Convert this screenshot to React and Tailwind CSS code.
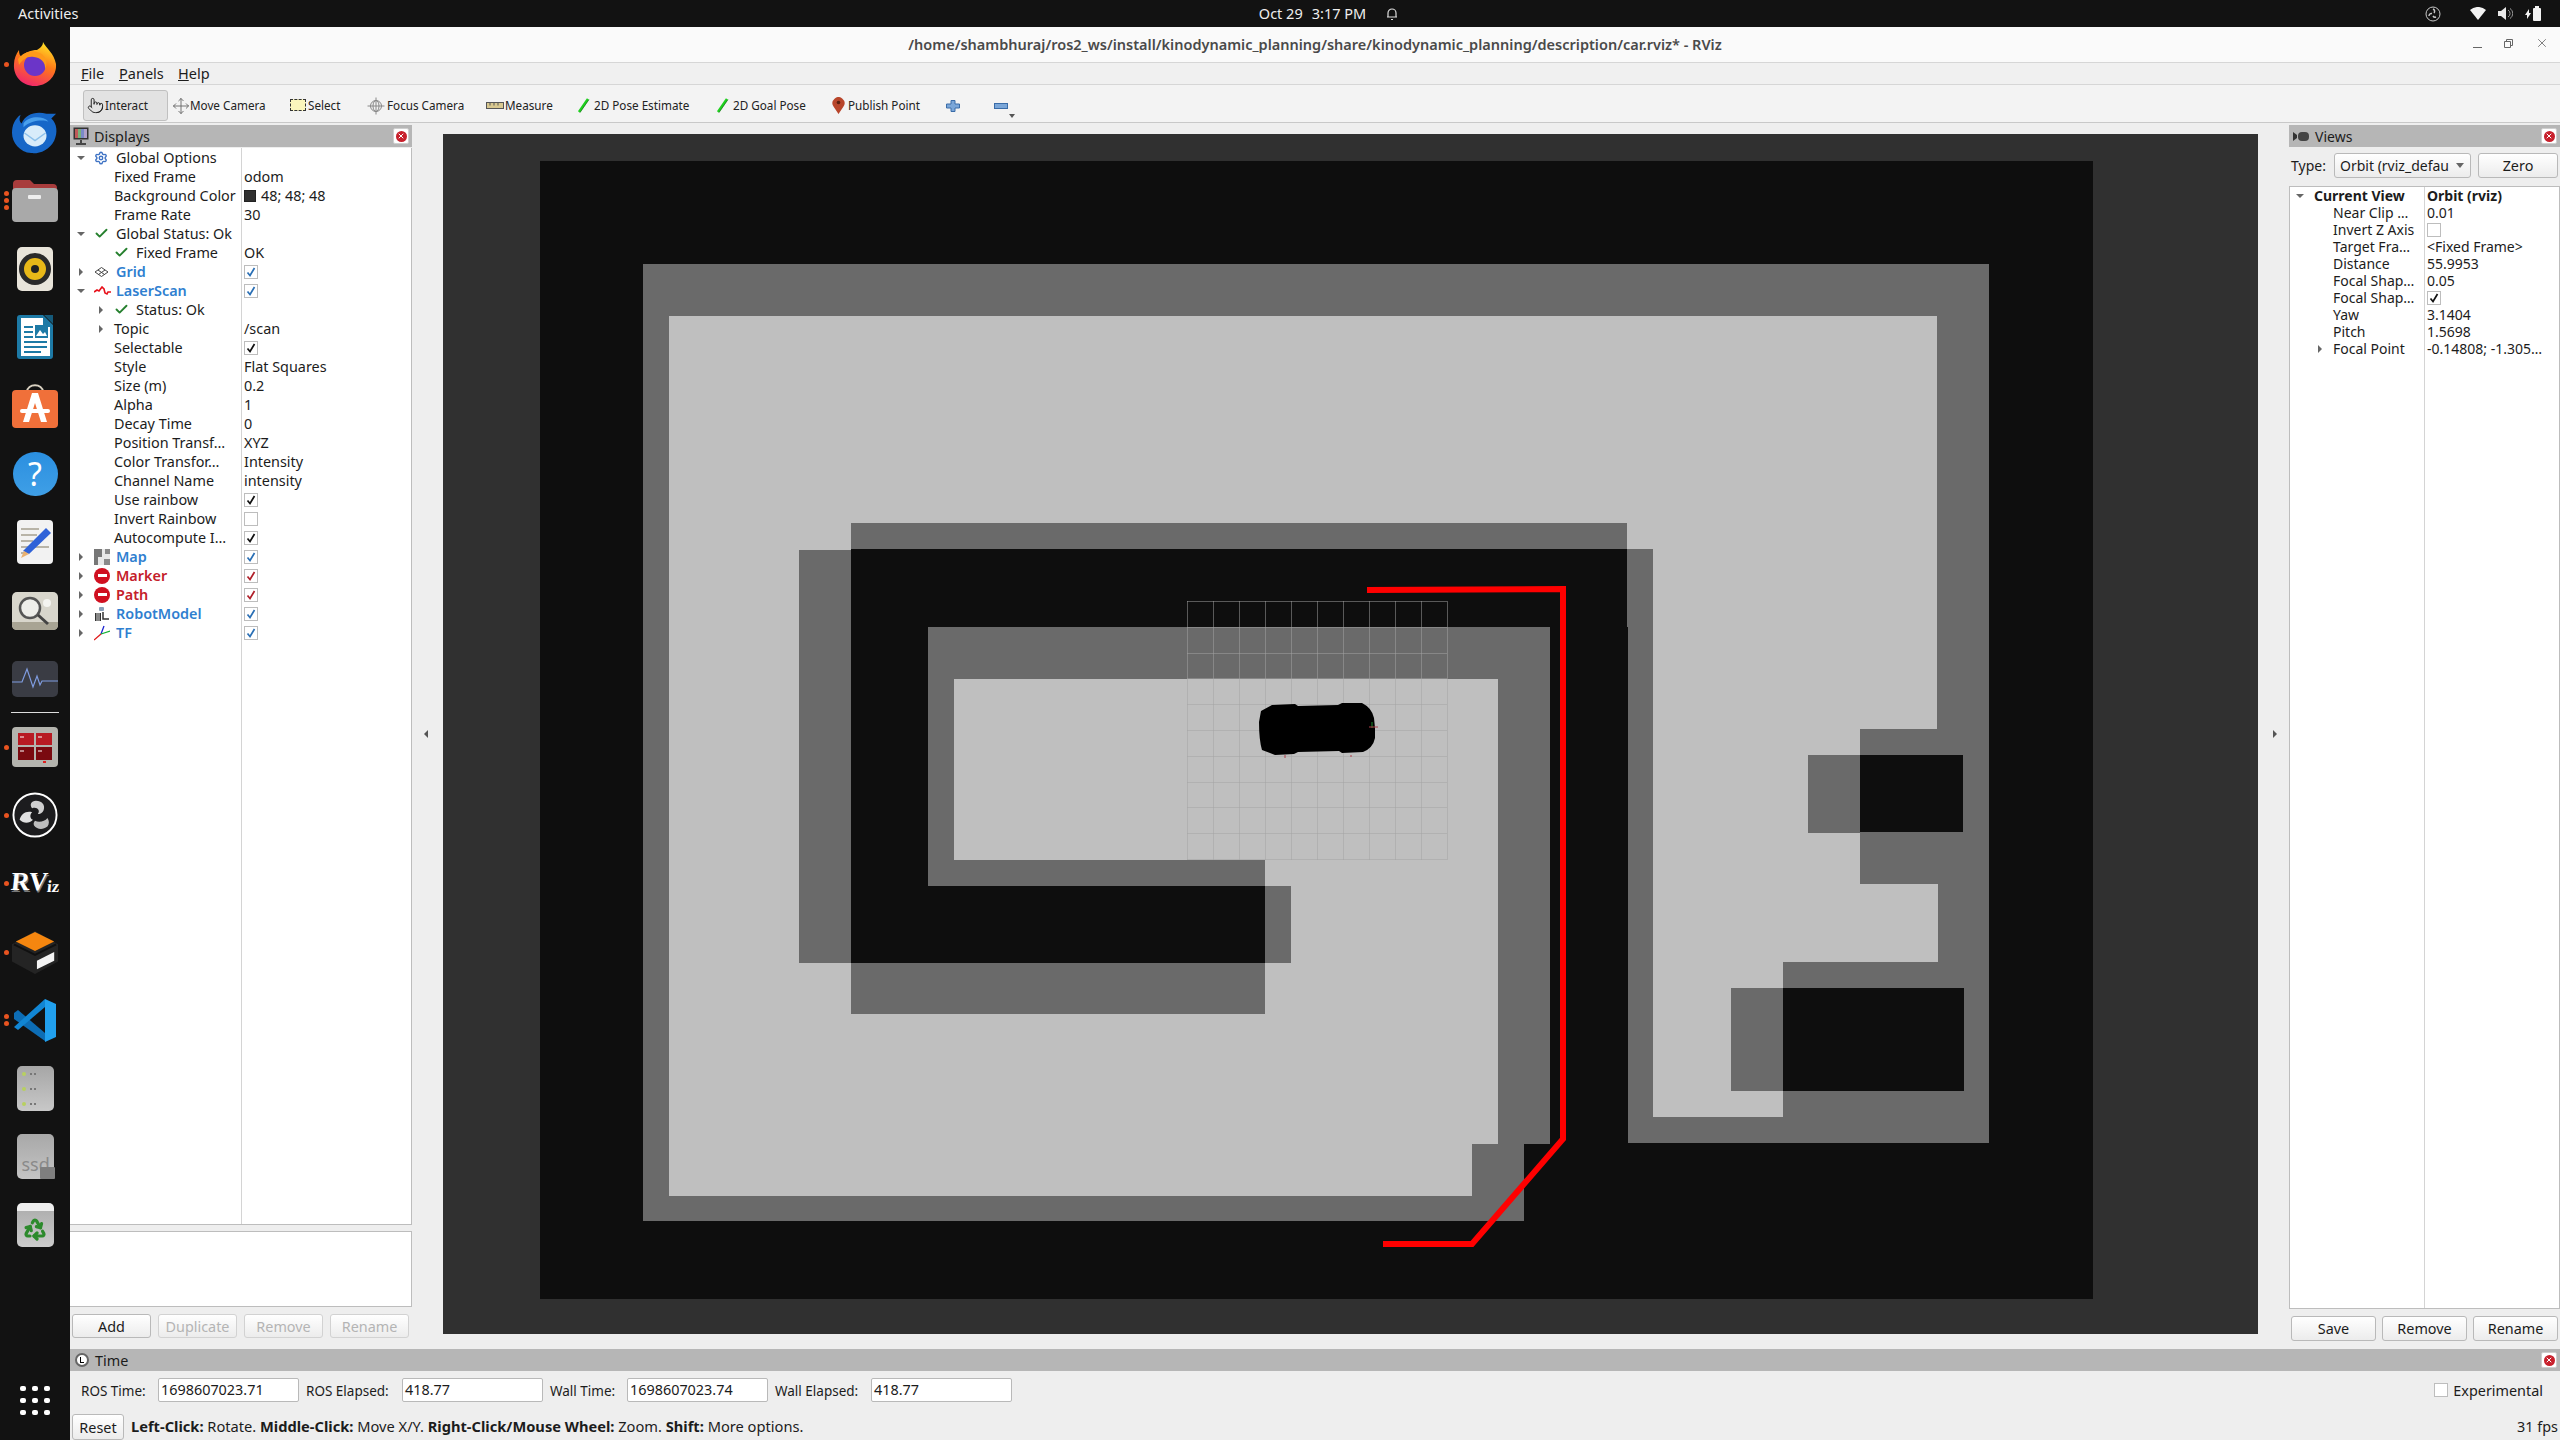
import { Check, Move, Pointer, Recycle, Settings, X } from 'lucide-react';

const displayRows = [
  { level: 0, arrow: 'down', icon: 'gear', label: 'Global Options' },
  { level: 1, label: 'Fixed Frame', value: 'odom' },
  { level: 1, label: 'Background Color', value: '48; 48; 48', swatch: true },
  { level: 1, label: 'Frame Rate', value: '30' },
  { level: 0, arrow: 'down', icon: 'check', label: 'Global Status: Ok' },
  { level: 1, icon: 'check', label: 'Fixed Frame', value: 'OK' },
  { level: 0, arrow: 'right', icon: 'grid', label: 'Grid', tone: 'blue', box: 'blue' },
  { level: 0, arrow: 'down', icon: 'laser', label: 'LaserScan', tone: 'blue', box: 'blue' },
  { level: 1, arrow: 'right', icon: 'check', label: 'Status: Ok' },
  { level: 1, arrow: 'right', label: 'Topic', value: '/scan' },
  { level: 1, label: 'Selectable', box: 'black' },
  { level: 1, label: 'Style', value: 'Flat Squares' },
  { level: 1, label: 'Size (m)', value: '0.2' },
  { level: 1, label: 'Alpha', value: '1' },
  { level: 1, label: 'Decay Time', value: '0' },
  { level: 1, label: 'Position Transf…', value: 'XYZ' },
  { level: 1, label: 'Color Transfor…', value: 'Intensity' },
  { level: 1, label: 'Channel Name', value: 'intensity' },
  { level: 1, label: 'Use rainbow', box: 'black' },
  { level: 1, label: 'Invert Rainbow', box: 'empty' },
  { level: 1, label: 'Autocompute I…', box: 'black' },
  { level: 0, arrow: 'right', icon: 'map', label: 'Map', tone: 'blue', box: 'blue' },
  { level: 0, arrow: 'right', icon: 'error', label: 'Marker', tone: 'red', box: 'red' },
  { level: 0, arrow: 'right', icon: 'error', label: 'Path', tone: 'red', box: 'red' },
  { level: 0, arrow: 'right', icon: 'robot', label: 'RobotModel', tone: 'blue', box: 'blue' },
  { level: 0, arrow: 'right', icon: 'tf', label: 'TF', tone: 'blue', box: 'blue' },
];

const viewRows = [
  { label: 'Near Clip …', value: '0.01' },
  { label: 'Invert Z Axis', box: true },
  { label: 'Target Fra…', value: '<Fixed Frame>' },
  { label: 'Distance', value: '55.9953' },
  { label: 'Focal Shap…', value: '0.05' },
  { label: 'Focal Shap…', box: true, checked: true },
  { label: 'Yaw', value: '3.1404' },
  { label: 'Pitch', value: '1.5698' },
  { label: 'Focal Point', value: '-0.14808; -1.305…', arrow: true },
];

const CheckBox = ({ tone }) => {
  const stroke = { blue: '#2a6fb5', red: '#b0202a', black: '#111111' }[tone];
  return (
    <span className="flex h-[14px] w-[14px] items-center justify-center border border-[#bdbdbd] bg-white">
      {stroke && (
        <svg width="10" height="10" viewBox="0 0 10 10">
          <path d="M1.5 5.5 L4 8.5 L8.5 1" fill="none" stroke={stroke} strokeWidth="1.7" />
        </svg>
      )}
    </span>
  );
};

const Arrow = ({ dir }) => (
  <svg width="8" height="8" viewBox="0 0 8 8">
    {dir === 'down' ? <path d="M0 2 H8 L4 6 Z" fill="#666666" /> : <path d="M2 0 V8 L6 4 Z" fill="#666666" />}
  </svg>
);

const CloseButton = () => (
  <span className="flex h-[16px] w-[16px] items-center justify-center rounded-[2px] border border-[#cfcfcf] bg-white">
    <span className="flex h-[11px] w-[11px] items-center justify-center rounded-full bg-[#c8202c]">
      <X size={8} color="#ffffff" strokeWidth={3} />
    </span>
  </span>
);

const TreeIcon = ({ name }) => {
  if (name === 'gear') return <Settings size={14} color="#3f73c4" strokeWidth={2.4} />;
  if (name === 'check') return <Check size={15} color="#26802e" strokeWidth={3} />;
  if (name === 'grid') {
    return (
      <svg width="15" height="10" viewBox="0 0 15 10" fill="none" stroke="#444444">
        <path d="M7.5 .5 L14 5 L7.5 9.5 L1 5 Z M4 3 L10.5 7.5 M11 3 L4.500 7.500" />
      </svg>
    );
  }
  if (name === 'laser') {
    return (
      <svg width="17" height="10" viewBox="0 0 17 10" fill="none" stroke="#e8101a" strokeWidth="1.6">
        <path d="M0 6 L3 4 L5 5 L8 1 L10 3 L11 7 L13 8 L14 6 L17 6" />
      </svg>
    );
  }
  if (name === 'map') {
    return (
      <svg width="16" height="16" viewBox="0 0 16 16">
        <rect width="16" height="16" fill="#e8e8e8" />
        <path d="M0 0 H8 V8 H4 V16 H0 Z" fill="#777777" />
        <path d="M11 0 H16 V5 H11 Z M10 10 H16 V16 H10 Z" fill="#8a8a8a" />
      </svg>
    );
  }
  if (name === 'error') {
    return (
      <span className="flex h-[16px] w-[16px] items-center justify-center rounded-full bg-[#d01020]">
        <span className="h-[3px] w-[9px] bg-white" />
      </span>
    );
  }
  if (name === 'robot') {
    return (
      <svg width="16" height="16" viewBox="0 0 16 16">
        <rect x="5" y="1" width="5" height="4" rx="1" fill="#8aa0b8" />
        <rect x="1" y="7" width="6" height="8" fill="#333333" />
        <path d="M3 7 V15 M5 7 V15" stroke="#dddddd" />
        <path d="M9 6 V13 H15" fill="none" stroke="#333333" strokeWidth="1.5" />
      </svg>
    );
  }
  if (name === 'tf') {
    return (
      <svg width="16" height="16" viewBox="0 0 16 16" fill="none" strokeWidth="1.3">
        <path d="M7 9 L10 1" stroke="#1a22d0" />
        <path d="M7 9 L16 6" stroke="#12b030" />
        <path d="M7 9 L0 15" stroke="#e01818" />
      </svg>
    );
  }
  return null;
};

const DisplayRow = ({ row }) => {
  const tone = { blue: 'font-semibold text-[#2f7fd0]', red: 'font-semibold text-[#c4202a]' }[row.tone] || 'text-[#1c1c1c]';
  return (
    <div className="flex h-[19px] items-center text-[14.4px]">
      <div className={`flex w-[170px] shrink-0 items-center overflow-hidden whitespace-nowrap ${row.level === 1 ? 'pl-[20px]' : ''}`}>
        <span className={`flex shrink-0 items-center justify-center ${row.level === 1 ? 'w-[23px] pr-[3px]' : 'w-[20px]'}`}>
          {row.arrow && <Arrow dir={row.arrow} />}
        </span>
        {row.icon && (
          <span className={`flex shrink-0 items-center ${row.level === 1 ? 'w-[22px]' : 'w-[25px] pl-[3px]'}`}>
            <TreeIcon name={row.icon} />
          </span>
        )}
        {!row.icon && row.level === 0 && <span className="w-[25px]" />}
        <span className={`pt-px ${tone}`}>{row.label}</span>
      </div>
      <div className="flex h-full flex-1 items-center gap-[5px] border-l border-[#d4d4d4] pl-[2px] text-[#1c1c1c]">
        {row.swatch && <span className="h-[12px] w-[12px] border border-[#222222] bg-[#303030]" />}
        {row.value && <span className="pt-px">{row.value}</span>}
        {row.box && <CheckBox tone={row.box === 'empty' ? null : row.box} />}
      </div>
    </div>
  );
};

const QtButton = ({ children, disabled, className }) => (
  <button
    className={`flex items-center justify-center rounded-[3px] border bg-gradient-to-b from-white to-[#ececec] pt-px text-[14.4px] ${
      disabled ? 'border-[#d2d2d2] text-[#b4b4b4]' : 'border-[#b9b9b9] text-[#1c1c1c]'
    } ${className}`}
  >
    {children}
  </button>
);

const ToolItem = ({ icon, label, width, gap = 1, className = '' }) => (
  <div className={`flex shrink-0 items-center ${className}`} style={{ width }}>
    {icon}
    <span style={{ marginLeft: gap }}>{label}</span>
  </div>
);

const PoseIcon = () => (
  <svg width="18" height="15" viewBox="0 0 18 15">
    <path d="M4 14 L13 1" stroke="#1fd01f" strokeWidth="2.600" />
    <path d="M5 14.500 L14 1.500" stroke="#0a4a0a" strokeWidth=".5" />
  </svg>
);

const Toolbar = () => (
  <div className="flex h-[38px] shrink-0 items-center border-b border-[#c8c8c8] bg-[#f3f3f3] pl-[13px] pt-[4px] text-[11.700px] text-[#222222]">
    <div className="flex h-[31px] w-[85px] items-center rounded-[3px] border border-[#c0c0c0] bg-[#e2e2e2] pl-[3px]">
      <Pointer size={17} color="#222222" strokeWidth={1.4} />
      <span className="ml-[1px]">Interact</span>
    </div>
    <ToolItem className="ml-[4px]" width={118} icon={<Move size={18} color="#666666" strokeWidth={1.2} />} label="Move Camera" gap={0} />
    <ToolItem
      width={77}
      icon={<span className="h-[12px] w-[16px] border border-dashed border-[#333333] bg-[#fbf6bc]" />}
      label="Select"
      gap={2}
    />
    <ToolItem
      width={119}
      icon={
        <svg width="18" height="18" viewBox="0 0 18 18" fill="none" stroke="#888888">
          <circle cx="9" cy="9" r="5.500" />
          <path d="M9 .5 V17.500 M.5 9 H17.500 M6 9 A3 5.500 0 0 1 12 9 A3 5.500 0 0 1 6 9" />
        </svg>
      }
      label="Focus Camera"
      gap={2}
    />
    <ToolItem
      width={89}
      icon={
        <svg width="18" height="7" viewBox="0 0 18 7">
          <rect x=".5" y=".5" width="17" height="6" fill="#d8c890" stroke="#555555" />
          <path d="M4 1 V3.500 M8 1 V3.500 M12 1 V3.500" stroke="#555555" />
        </svg>
      }
      label="Measure"
    />
    <ToolItem width={139} icon={<PoseIcon />} label="2D Pose Estimate" />
    <ToolItem width={118} icon={<PoseIcon />} label="2D Goal Pose" />
    <ToolItem
      width={114}
      icon={
        <svg width="13" height="17" viewBox="0 0 13 17">
          <path d="M6.500 17 L1.500 9.500 A6 6 0 1 1 11.500 9.500 Z" fill="#b8452a" />
          <circle cx="6.500" cy="5.500" r="1.800" fill="#5a2010" />
        </svg>
      }
      label="Publish Point"
      gap={3}
    />
    <svg width="14" height="12" viewBox="0 0 14 12" fill="#7aa6d8" stroke="#3a6ca8">
      <path d="M5 .5 H9 V4 H13.500 V8 H9 V11.500 H5 V8 H.5 V4 H5 Z" />
    </svg>
    <svg className="ml-[34px]" width="14" height="6" viewBox="0 0 14 6" fill="#7aa6d8" stroke="#3a6ca8">
      <rect x=".5" y=".5" width="13" height="5" />
    </svg>
    <svg className="ml-[1px] mt-[20px]" width="6" height="4" viewBox="0 0 6 4" fill="#555555">
      <path d="M0 0 H6 L3 4 Z" />
    </svg>
  </div>
);

const MapView = () => (
  <svg className="block" width="1815" height="1200" viewBox="443 134 1815 1200" shapeRendering="crispEdges">
    <rect x="443" y="134" width="1815" height="1200" fill="#303030" />
    <rect x="540" y="161" width="1553" height="1138" fill="#0e0e0e" />
    {/* outer walls */}
    <g fill="#6a6a6a">
      <path d="M643 264 H1989 V1143 H1524 V1221 H643 Z" />
    </g>
    {/* free space */}
    <g fill="#bfbfbf">
      <path d="M669 316 H1937 V729 H1860 V884 H1938 V962 H1783 V1117 H1653 V729 H1498 V1144 H1472 V1196 H669 Z" />
    </g>
    {/* inner island */}
    <g fill="#6a6a6a">
      <rect x="851" y="523" width="776" height="26" />
      <rect x="799" y="550" width="52" height="413" />
      <rect x="851" y="963" width="414" height="51" />
      <rect x="1627" y="549" width="26" height="594" />
      <rect x="1498" y="627" width="52" height="517" />
      <rect x="928" y="627" width="622" height="52" />
      <rect x="928" y="679" width="26" height="207" />
      <rect x="954" y="860" width="311" height="26" />
      <rect x="1265" y="886" width="26" height="77" />
      <rect x="1808" y="755" width="52" height="78" />
      <rect x="1731" y="988" width="52" height="103" />
    </g>
    <g fill="#0e0e0e">
      <rect x="851" y="549" width="776" height="78" />
      <rect x="851" y="627" width="77" height="336" />
      <rect x="928" y="886" width="337" height="77" />
      <rect x="1550" y="627" width="78" height="516" />
      <rect x="1860" y="755" width="103" height="77" />
      <rect x="1783" y="988" width="181" height="103" />
    </g>
    {/* grid */}
    <g stroke="#a4a4a4" strokeOpacity=".5" strokeWidth="1">
      {Array.from({ length: 11 }, (_, i) => (
        <line key={`v${i}`} x1={1187.5 + i * 26} y1="601" x2={1187.5 + i * 26} y2="860" />
      ))}
      {Array.from({ length: 11 }, (_, i) => (
        <line key={`h${i}`} x1="1187" y1={601.5 + i * 25.8} x2="1447" y2={601.5 + i * 25.8} />
      ))}
    </g>
    {/* robot */}
    <g shapeRendering="auto">
      <path
        d="M1261 711 L1272 705 L1295 704 L1298 706 L1338 705 L1342 703 L1362 703 Q1372 708 1374 718 L1375 728 L1375 738 Q1373 748 1363 752 L1342 753 L1339 751 L1298 752 L1294 754 L1275 755 L1262 750 Q1259 740 1259 722 Z"
        fill="#000000"
      />
      <path d="M1372 722 V728" stroke="#1a8a2a" strokeWidth="1" />
      <path d="M1369 727 H1378 M1285 755 V758 M1351 755 V757" stroke="#b0404a" strokeWidth="1" />
      <path d="M1367 590 L1563 589 L1563 1139 L1472 1244 L1383 1244" fill="none" stroke="#ff0000" strokeWidth="6" />
    </g>
  </svg>
);

const DisplaysPanel = () => (
  <div className="flex w-[342px] shrink-0 flex-col pb-[11px]">
    <div className="flex h-[22px] shrink-0 items-center bg-[#b6b6b6] pl-[3px] pr-[3px] text-[14.400px] text-[#1c1c1c]">
      <svg width="16" height="18" viewBox="0 0 16 18">
        <rect x=".5" y=".5" width="15" height="12" fill="#333333" />
        <rect x="2" y="2" width="3" height="9" fill="#c05a5a" />
        <rect x="5" y="2" width="3" height="9" fill="#7ab07a" />
        <rect x="8" y="2" width="3" height="9" fill="#7a8ac8" />
        <rect x="11" y="2" width="3" height="9" fill="#b0a0c8" />
        <path d="M8 13 V16 M3 17 H13" stroke="#222222" strokeWidth="1.5" />
      </svg>
      <span className="ml-[5px] flex-1 pt-px">Displays</span>
      <CloseButton />
    </div>
    <div className="mt-px flex-1 overflow-hidden border-b border-r border-[#bdbdbd] bg-white pl-px">
      {displayRows.map((row, i) => (
        <DisplayRow key={i} row={row} />
      ))}
      <div className="ml-[170px] h-full border-l border-[#d4d4d4]" />
    </div>
    <div className="mt-[6px] h-[76px] shrink-0 border-y border-r border-[#bdbdbd] bg-white" />
    <div className="mt-[7px] flex h-[24px] shrink-0 gap-[7px] pl-[2px]">
      <QtButton className="w-[79px]">Add</QtButton>
      <QtButton disabled className="w-[79px]">Duplicate</QtButton>
      <QtButton disabled className="w-[79px]">Remove</QtButton>
      <QtButton disabled className="w-[79px]">Rename</QtButton>
    </div>
  </div>
);

const ViewsPanel = () => (
  <div className="flex w-[271px] shrink-0 flex-col pb-[8px] text-[14px] text-[#1c1c1c]">
    <div className="flex h-[22px] shrink-0 items-center bg-[#b6b6b6] pl-[4px] pr-[3px]">
      <svg width="16" height="9" viewBox="0 0 16 9">
        <path d="M0 0 L4 3 V6 L0 9 Z" fill="#333333" />
        <rect x="5" y="0" width="11" height="9" rx="4" fill="#444444" />
      </svg>
      <span className="ml-[6px] flex-1 pt-px">Views</span>
      <CloseButton />
    </div>
    <div className="mt-[6px] flex h-[25px] shrink-0 items-center pl-[2px]">
      <span className="w-[43px]">Type:</span>
      <div className="flex h-full w-[137px] items-center justify-between rounded-[3px] border border-[#b9b9b9] bg-gradient-to-b from-white to-[#ececec] pl-[5px] pr-[6px]">
        <span className="w-[110px] overflow-hidden whitespace-nowrap">Orbit (rviz_defau</span>
        <svg width="8" height="5" viewBox="0 0 8 5" fill="#666666">
          <path d="M0 0 H8 L4 5 Z" />
        </svg>
      </div>
      <QtButton className="ml-[7px] h-full w-[80px]">Zero</QtButton>
    </div>
    <div className="mt-[8px] flex-1 overflow-hidden border border-[#bdbdbd] bg-white">
      <div className="flex h-[17px] items-center font-bold">
        <div className="flex w-[134px] shrink-0 items-center pl-[6px]">
          <span className="flex w-[18px] justify-start">
            <Arrow dir="down" />
          </span>
          Current View
        </div>
        <div className="flex h-full flex-1 items-center border-l border-[#d4d4d4] pl-[2px]">Orbit (rviz)</div>
      </div>
      {viewRows.map((row, i) => (
        <div key={i} className="flex h-[17px] items-center">
          <div className="flex w-[134px] shrink-0 items-center overflow-hidden whitespace-nowrap pl-[26px]">
            <span className="flex w-[17px] shrink-0 justify-start">{row.arrow && <Arrow dir="right" />}</span>
            {row.label}
          </div>
          <div className="flex h-full flex-1 items-center whitespace-nowrap border-l border-[#d4d4d4] pl-[2px]">
            {row.value}
            {row.box && <CheckBox tone={row.checked ? 'black' : null} />}
          </div>
        </div>
      ))}
      <div className="ml-[134px] h-full border-l border-[#d4d4d4]" />
    </div>
    <div className="mt-[7px] flex h-[25px] shrink-0 gap-[6px] pl-[2px]">
      <QtButton className="w-[85px]">Save</QtButton>
      <QtButton className="w-[85px]">Remove</QtButton>
      <QtButton className="w-[85px]">Rename</QtButton>
    </div>
  </div>
);

const TimeField = ({ label, value, labelWidth }) => (
  <div className="flex items-center">
    <span className="pt-[2px] text-[13.500px]" style={{ width: labelWidth }}>{label}</span>
    <span className="flex h-[24px] w-[141px] items-center rounded-[2px] border border-[#b9b9b9] bg-white pl-[2px] text-[14.400px]">{value}</span>
  </div>
);

const TimePanel = () => (
  <div className="flex h-[91px] shrink-0 flex-col text-[14.400px] text-[#1c1c1c]">
    <div className="flex h-[22px] shrink-0 items-center bg-[#b6b6b6] pl-[5px] pr-[3px]">
      <span className="flex h-[14px] w-[14px] items-center justify-center rounded-full border-2 border-[#666666] bg-white">
        <span className="mb-[1px] h-[6px] w-[4px] border-b border-l border-black" />
      </span>
      <span className="ml-[6px] flex-1 pt-px">Time</span>
      <CloseButton />
    </div>
    <div className="mt-[7px] flex h-[24px] shrink-0 items-center gap-[7px] pl-[11px]">
      <TimeField label="ROS Time:" value="1698607023.71" labelWidth={77} />
      <TimeField label="ROS Elapsed:" value="418.77" labelWidth={96} />
      <TimeField label="Wall Time:" value="1698607023.74" labelWidth={77} />
      <TimeField label="Wall Elapsed:" value="418.77" labelWidth={96} />
      <div className="ml-auto flex items-center pr-[17px]">
        <CheckBox />
        <span className="ml-[5px] pt-[2px]">Experimental</span>
      </div>
    </div>
    <div className="mt-[12px] flex h-[26px] shrink-0 items-center pl-[2px] pr-[2px]">
      <QtButton className="h-full w-[52px]">Reset</QtButton>
      <p className="ml-[7px] flex-1 whitespace-pre text-[14.650px]">
        <b>Left-Click:</b> Rotate. <b>Middle-Click:</b> Move X/Y. <b>Right-Click/Mouse Wheel:</b> Zoom. <b>Shift:</b> More options.
      </p>
      <span>31 fps</span>
    </div>
  </div>
);

const Dots = ({ count }) => (
  <div className="flex w-[12px] flex-col items-center gap-[2px] pl-[1px]">
    {Array.from({ length: count }, (_, i) => (
      <span key={i} className="h-[5px] w-[5px] rounded-full bg-[#e95420]" />
    ))}
  </div>
);

const dockIcons = [
  {
    dots: 1,
    art: (
      <svg width="44" height="46" viewBox="0 0 44 46">
        <defs>
          <linearGradient id="ffx" x1="0.7" y1="0" x2="0.3" y2="1">
            <stop offset="0" stopColor="#ffe226" />
            <stop offset=".45" stopColor="#ff7a18" />
            <stop offset="1" stopColor="#f0246e" />
          </linearGradient>
        </defs>
        <path d="M30 1 C33 7 41 12 43 23 C44 36 33 45 22 45 C9 45 0 35 1 23 C1 18 3 13 6 9 C6 13 7 15 9 16 C12 11 18 9 24 9 C27 7 30 5 30 1 Z" fill="url(#ffx)" />
        <circle cx="22" cy="24" r="11" fill="#6b35c8" />
        <path d="M5 18 C11 10 20 9 27 12 C33 15 35 22 32 29 C33 21 28 17 21 16 C14 15 10 18 6 24 Z" fill="#ff9a1a" />
      </svg>
    ),
  },
  {
    art: (
      <svg width="48" height="46" viewBox="0 0 48 46">
        <path d="M9 5 C7 10 8 12 10 14 C14 5 24 1 36 4 L46 4 L41 9 C47 14 48 24 44 32 C39 42 28 46 20 45 C8 44 0 34 0 24 C0 16 3 9 9 5 Z" fill="#1667c8" />
        <path d="M12 14 C18 6 32 6 38 12 C33 10 20 10 12 18 Z" fill="#4aa0ec" />
        <ellipse cx="24" cy="27" rx="12" ry="11" fill="#d8ecfa" />
        <path d="M13 24 L24 32 L35 24" fill="none" stroke="#8cc0ea" strokeWidth="1.5" />
      </svg>
    ),
  },
  {
    dots: 3,
    art: (
      <svg width="46" height="42" viewBox="0 0 46 42">
        <path d="M1 4 Q1 0 5 0 H18 L22 4 H41 Q45 4 45 8 V20 H1 Z" fill="#a83c3c" />
        <rect x="0" y="8" width="46" height="34" rx="4" fill="#a9a9a9" />
        <rect x="16" y="15" width="13" height="4" rx="1" fill="#eeeeee" />
      </svg>
    ),
  },
  {
    art: (
      <span className="flex h-[44px] w-[36px] items-center justify-center rounded-[5px] bg-[#e8e4da]">
        <span className="flex h-[32px] w-[32px] items-center justify-center rounded-full border-[5px] border-[#2a2a2a] bg-[#e8b818]">
          <span className="h-[8px] w-[8px] rounded-full bg-[#222222]" />
        </span>
      </span>
    ),
  },
  {
    art: (
      <svg width="36" height="44" viewBox="0 0 36 44">
        <path d="M3 0 H26 L36 10 V41 Q36 44 33 44 H3 Q0 44 0 41 V3 Q0 0 3 0 Z" fill="#1d7aa6" />
        <path d="M4 3 H26 V12 H33 V41 H4 Z" fill="#ffffff" />
        <path d="M27 0 L36 0 V9 Z" fill="#155a7a" />
        <path d="M7 12 H16 M7 17 H16 M7 22 H16 M7 27 H30 M7 32 H30 M7 37 H24" stroke="#1d7aa6" strokeWidth="2" />
        <rect x="18" y="10" width="13" height="13" fill="#1d7aa6" />
        <path d="M19 21 L23 15 L26 19 L28 17 L30 21 Z" fill="#ffffff" />
      </svg>
    ),
  },
  {
    art: (
      <svg width="46" height="44" viewBox="0 0 46 44">
        <path d="M15 8 C15 -1 31 -1 31 8" fill="none" stroke="#d8d0c0" strokeWidth="2" />
        <rect x="0" y="6" width="46" height="38" rx="4" fill="#f0703a" />
        <path d="M20 9 H26 L35 38 H29 L23 19 L17 38 H11 Z" fill="#ffffff" />
        <rect x="8" y="25" width="30" height="4" rx="2" fill="#ffffff" />
      </svg>
    ),
  },
  {
    art: (
      <span className="flex h-[44px] w-[45px] items-center justify-center rounded-full bg-gradient-to-b from-[#2a8fe0] to-[#3f9fe6] text-[32px] leading-none text-white">
        ?
      </span>
    ),
  },
  {
    art: (
      <svg width="36" height="44" viewBox="0 0 36 44">
        <rect width="36" height="44" rx="4" fill="#f2f2f2" />
        <path d="M4 9 H22 M4 15 H20 M4 21 H16 M4 27 H14 M16 27 H32 M4 33 H10" stroke="#b8b4a8" strokeWidth="2" />
        <path d="M29 8 L34 13 L12 34 L6 31 Z" fill="#2f62d8" />
        <path d="M7 31 L12 34 L4 38 Z" fill="#e8b070" />
      </svg>
    ),
  },
  {
    art: (
      <svg width="46" height="38" viewBox="0 0 46 38">
        <rect width="46" height="38" rx="5" fill="#d8d6cc" />
        <path d="M0 30 H46 V33 Q46 38 41 38 H5 Q0 38 0 33 Z" fill="#a8a494" />
        <circle cx="35" cy="11" r="4" fill="#f4f4f0" />
        <circle cx="18" cy="16" r="10" fill="#eeeeea" stroke="#555555" strokeWidth="2.5" />
        <path d="M26 23 L36 32" stroke="#444444" strokeWidth="3" />
      </svg>
    ),
  },
  {
    art: (
      <svg width="46" height="36" viewBox="0 0 46 36">
        <rect width="46" height="36" rx="5" fill="#3a3c44" />
        <path d="M0 21 H6 L10 21 L15 8 L21 26 L25 15 L28 24 L30 20 H46" fill="none" stroke="#7f9ce0" strokeWidth="1.200" />
      </svg>
    ),
  },
  {
    dots: 1,
    art: (
      <svg width="46" height="40" viewBox="0 0 46 40">
        <rect width="46" height="40" rx="4" fill="#b4b4ae" />
        <rect x="6" y="6" width="16" height="12" fill="#b81a22" />
        <rect x="24" y="6" width="16" height="12" fill="#b81a22" />
        <rect x="6" y="20" width="16" height="13" fill="#7a0a10" />
        <rect x="24" y="20" width="16" height="13" fill="#7a0a10" />
        <path d="M8 10 H12 M26 10 H30 M8 24 H12 M26 24 H30" stroke="#ffffff" />
        <rect x="31" y="34" width="3" height="2" fill="#e02020" />
      </svg>
    ),
  },
  {
    dots: 1,
    art: (
      <svg width="48" height="48" viewBox="0 0 48 48">
        <circle cx="24" cy="24" r="22.500" fill="#1c1c1e" stroke="#ffffff" strokeWidth="2" />
        <path d="M25 9 C31 9 35 13 33 19 C32 22 29 23 27 23 C30 19 26 15 21 17 C18 13 20 9 25 9 Z" fill="#cfcfcf" />
        <path d="M8 29 C9 23 15 19 21 21 C18 24 19 28 22 29 C18 33 12 33 8 29 Z" fill="#e0e0e0" />
        <path d="M37 36 C32 40 26 39 23 35 C22 33 23 31 24 30 C28 32 34 31 37 27 C39 30 39 33 37 36 Z" fill="#bdbdbd" />
      </svg>
    ),
  },
  {
    dots: 1,
    art: (
      <span className="-mt-[4px] flex items-end font-['Liberation_Serif',serif] font-bold leading-none text-white">
        <span className="-skew-x-6 text-[26px] [text-shadow:1px_2px_0_#777777]">RV</span>
        <span className="-skew-x-6 text-[17px]">iz</span>
      </span>
    ),
  },
  {
    dots: 1,
    art: (
      <svg width="48" height="45" viewBox="0 0 48 45">
        <path d="M24 0 L48 14 V32 L24 45 L0 32 V14 Z" fill="#242424" />
        <path d="M24 1 L44 11 L24 21 L4 11 Z" fill="#f5860f" />
        <path d="M44 22 V31 L26 40 V31 Z" fill="#f4f4f4" />
        <path d="M2 14 L24 25 L46 14" fill="none" stroke="#101010" strokeWidth="2" />
      </svg>
    ),
  },
  {
    dots: 2,
    art: (
      <svg width="42" height="43" viewBox="0 0 42 43">
        <path d="M0 14 L4 11 L31 34 L31 42 L0 20 Z" fill="#0d6db5" />
        <path d="M0 28 L31 0 V8 L4 31 Z" fill="#1186d4" />
        <path d="M31 0 L42 5 V38 L31 43 Z" fill="#21a0ee" />
      </svg>
    ),
  },
  {
    art: (
      <span className="flex h-[45px] w-[37px] flex-col justify-center gap-[11px] rounded-[5px] bg-gradient-to-b from-[#a6a6a6] to-[#c8c8c8] pl-[5px]">
        {[0, 1, 2].map((i) => (
          <span key={i} className="flex items-center gap-[2px]">
            <span className="h-[4px] w-[4px] rounded-full bg-[#b8d060]" />
            <span className="ml-[2px] h-[2px] w-[2px] bg-[#777777]" />
            <span className="h-[2px] w-[2px] bg-[#777777]" />
          </span>
        ))}
      </span>
    ),
  },
  {
    art: (
      <span className="relative flex h-[45px] w-[37px] items-end rounded-[5px] bg-gradient-to-b from-[#a8a8a8] to-[#c4c4c4] pb-[6px] pl-[5px] text-[18px] leading-none text-[#8a8a8a]">
        ssd
        <span className="absolute -right-[1px] bottom-0 h-[12px] w-[15px] rounded-[1px] bg-[#7f7f7f]" />
      </span>
    ),
  },
  {
    art: (
      <span className="flex h-[44px] w-[37px] items-center justify-center rounded-[5px] border-t-[8px] border-[#eeeeee] bg-gradient-to-b from-[#b0b0b0] to-[#cccccc]">
        <Recycle size={24} color="#2c8a2c" strokeWidth={3.2} />
      </span>
    ),
  },
];

const Dock = () => (
  <div className="flex w-[70px] shrink-0 flex-col bg-[#121212] pt-[3px]">
    {dockIcons.map((item, i) => (
      <div key={i} className="contents">
        <div className="flex h-[68.3px] shrink-0 items-center">
          <div className="flex w-[12px] shrink-0">{item.dots && <Dots count={item.dots} />}</div>
          <div className="flex w-[46px] justify-center">{item.art}</div>
        </div>
        {i === 9 && <div className="mx-[11px] -mt-px h-px bg-[#dddddd]" />}
      </div>
    ))}
    <div className="mb-[25px] mt-auto grid w-[30px] grid-cols-3 gap-x-[6px] gap-y-[7px] self-center">
      {Array.from({ length: 9 }, (_, i) => (
        <span key={i} className="h-[5px] w-[6px] rounded-[2px] bg-white" />
      ))}
    </div>
  </div>
);

const TopBar = () => (
  <div className="grid h-[27px] shrink-0 grid-cols-[1fr_auto_1fr] items-center bg-[#121212] text-[14.500px] text-[#eeeeee]">
    <span className="pl-[18px]">Activities</span>
    <div className="flex items-center pl-[98px]">
      <span className="mr-[9px]">Oct 29</span>
      <span>3:17 PM</span>
      <svg className="ml-[19px]" width="14" height="14" viewBox="0 0 14 14" fill="none" stroke="#dddddd" strokeWidth="1.200">
        <path d="M3 10 V6 A4 4 0 0 1 11 6 V10 M2 10 H12 M6 12.500 H8" />
      </svg>
    </div>
    <div className="flex items-center justify-end pr-[18px]">
      <svg width="16" height="16" viewBox="0 0 16 16" fill="none" stroke="#c8c8c8">
        <circle cx="8" cy="8" r="7" />
        <path d="M8 3 A2.500 2.500 0 0 1 9 7 M4 10 A2.500 2.500 0 0 1 7 7.500 M11 11 A2.500 2.500 0 0 1 8 10" strokeWidth="1.500" />
      </svg>
      <svg className="ml-[29px]" width="16" height="13" viewBox="0 0 16 13" fill="#f2f2f2">
        <path d="M0 3 A12 12 0 0 1 16 3 L8 13 Z" />
      </svg>
      <svg className="ml-[12px]" width="15" height="13" viewBox="0 0 15 13" fill="#e8e8e8">
        <path d="M0 4 H3 L8 0 V13 L3 9 H0 Z" />
        <path d="M10 3 A4 4 0 0 1 10 10 M12 1.500 A6 6 0 0 1 12 11.500" fill="none" stroke="#9a9a9a" />
      </svg>
      <svg className="ml-[12px]" width="17" height="16" viewBox="0 0 17 16">
        <path d="M0 9 L4 3 V7 H6 L2 13 V9 Z" fill="#f2f2f2" />
        <rect x="8" y="2" width="8" height="13" rx="1" fill="#f2f2f2" />
        <rect x="10" y="0" width="4" height="2" fill="#f2f2f2" />
      </svg>
    </div>
  </div>
);

const TitleBar = () => (
  <div className="relative flex h-[36px] shrink-0 items-center justify-center border-b border-[#d6d6d6] bg-[#fafafa] text-[14.500px] font-semibold text-[#4a4a4a]">
    /home/shambhuraj/ros2_ws/install/kinodynamic_planning/share/kinodynamic_planning/description/car.rviz* - RViz
    <div className="absolute right-[11px] top-[9px] flex items-center gap-[22px] text-[#666666]">
      <span className="mt-[9px] h-px w-[9px] bg-[#666666]" />
      <svg width="9" height="9" viewBox="0 0 9 9" fill="none" stroke="#666666">
        <path d="M.5 2.500 H6.500 V8.500 H.5 Z M2.500 2 V.5 H8.500 V6.500 H7" />
      </svg>
      <X size={14} color="#666666" strokeWidth={1.4} />
    </div>
  </div>
);

const MenuBar = () => (
  <div className="flex h-[22px] shrink-0 items-center border-b border-[#d6d6d6] bg-[#f0f0f0] pl-[11px] pt-px text-[14.500px] text-[#1c1c1c]">
    <span className="w-[38px]"><span className="underline">F</span>ile</span>
    <span className="w-[59px]"><span className="underline">P</span>anels</span>
    <span><span className="underline">H</span>elp</span>
  </div>
);

export default function App() {
  return (
    <div className="flex h-[1440px] w-[2560px] flex-col overflow-hidden bg-[#121212] font-['Noto_Sans',sans-serif]">
      <TopBar />
      <div className="flex min-h-0 flex-1">
        <Dock />
        <div className="flex min-w-0 flex-1 flex-col bg-[#eeeeee]">
          <TitleBar />
          <MenuBar />
          <Toolbar />
          <div className="mt-[2px] flex min-h-0 flex-1">
            <DisplaysPanel />
            <div className="flex w-[31px] shrink-0 items-center justify-center pb-[6px] pr-[3px]">
              <svg width="4" height="8" viewBox="0 0 4 8" fill="#555555"><path d="M4 0 V8 L0 4 Z" /></svg>
            </div>
            <div className="mt-[9px] h-[1200px] flex-1">
              <MapView />
            </div>
            <div className="flex w-[31px] shrink-0 items-center justify-center pb-[6px] pl-[2px]">
              <svg width="4" height="8" viewBox="0 0 4 8" fill="#555555"><path d="M0 0 V8 L4 4 Z" /></svg>
            </div>
            <ViewsPanel />
          </div>
          <TimePanel />
        </div>
      </div>
    </div>
  );
}
